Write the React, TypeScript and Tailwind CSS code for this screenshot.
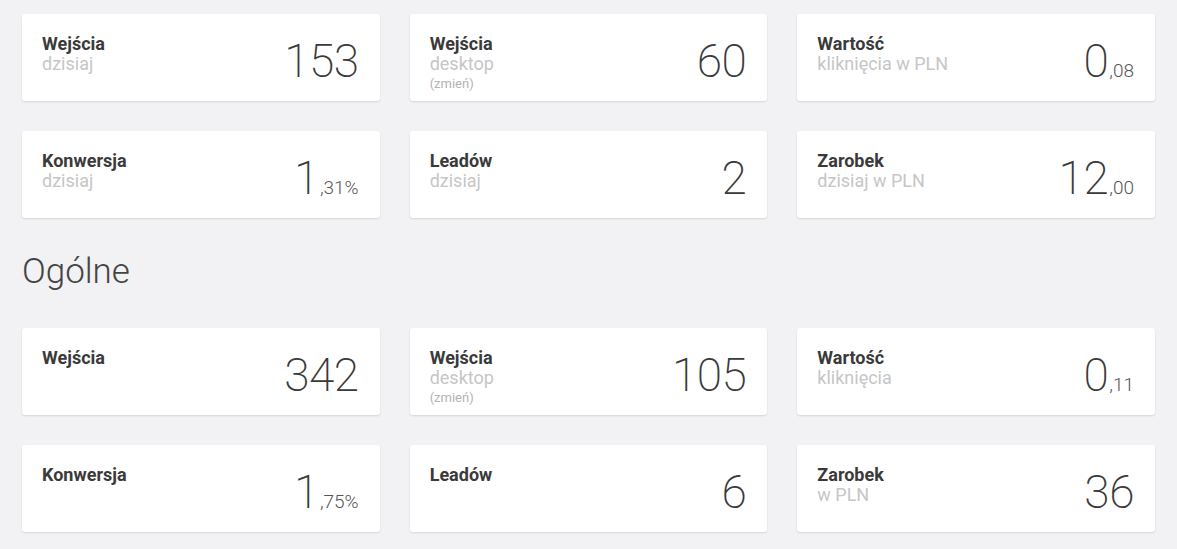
import React from 'react';

interface StatCardProps {
  title: string;
  sub?: string;
  note?: string;
  value: string;
  fraction?: string;
}

const StatCard: React.FC<StatCardProps> = ({ title, sub, note, value, fraction }) => {
  return (
    <div className="flex h-[87px] justify-between rounded-[3px] bg-white shadow-[0_1px_2px_rgba(0,0,0,0.12)]">
      <div className="pl-[20px] pt-[20px]">
        <div className="text-[18px] font-bold leading-[20px] text-[#3a3a3a]">{title}</div>
        {sub && <div className="text-[18px] leading-[20px] text-[#c6c6c6]">{sub}</div>}
        {note && <div className="mt-[2px] text-[13px] leading-[16px] text-[#b3b3b3]">{note}</div>}
      </div>
      <div className="flex items-baseline pr-[21px] pt-[24px]">
        <span className="text-[46px] font-extralight leading-[46px] tracking-[-0.5px] text-[#3a3a3a]">{value}</span>
        {fraction && <span className="pl-[1px] text-[19px] font-light text-[#555]">{fraction}</span>}
      </div>
    </div>
  );
};

const today: StatCardProps[] = [
  { title: 'Wejścia', sub: 'dzisiaj', value: '153' },
  { title: 'Wejścia', sub: 'desktop', note: '(zmień)', value: '60' },
  { title: 'Wartość', sub: 'kliknięcia w PLN', value: '0', fraction: ',08' },
  { title: 'Konwersja', sub: 'dzisiaj', value: '1', fraction: ',31%' },
  { title: 'Leadów', sub: 'dzisiaj', value: '2' },
  { title: 'Zarobek', sub: 'dzisiaj w PLN', value: '12', fraction: ',00' },
];

const overall: StatCardProps[] = [
  { title: 'Wejścia', value: '342' },
  { title: 'Wejścia', sub: 'desktop', note: '(zmień)', value: '105' },
  { title: 'Wartość', sub: 'kliknięcia', value: '0', fraction: ',11' },
  { title: 'Konwersja', value: '1', fraction: ',75%' },
  { title: 'Leadów', value: '6' },
  { title: 'Zarobek', sub: 'w PLN', value: '36' },
];

export default function App() {
  return (
    <div className="min-h-screen bg-[#f2f2f4] px-[22px] pb-[20px] pt-[14px] font-['Roboto',sans-serif]">
      <div className="grid grid-cols-3 gap-[30px]">
        {today.map((c, i) => (
          <StatCard key={i} {...c} />
        ))}
      </div>

      <h2 className="mb-[34px] mt-[32px] text-[35px] font-light leading-[44px] text-[#444]">Ogólne</h2>

      <div className="grid grid-cols-3 gap-[30px]">
        {overall.map((c, i) => (
          <StatCard key={i} {...c} />
        ))}
      </div>
    </div>
  );
}
